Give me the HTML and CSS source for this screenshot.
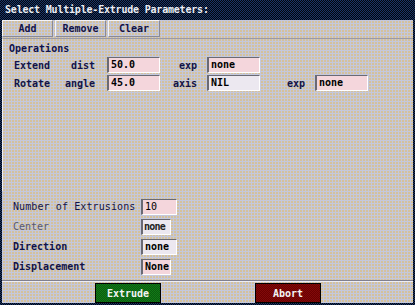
FILE: index.html
```html
<!DOCTYPE html>
<html lang="en">
<head>
  <meta charset="UTF-8" />
  <title>Select Multiple-Extrude Parameters</title>
  <link rel="stylesheet" href="styles.css">
</head>
<body>
  <div class="window">
    <div class="titlebar">Select Multiple-Extrude Parameters:</div>

    <div class="body">
      <div class="toolbar">
        <button class="tool">Add</button>
        <button class="tool">Remove</button>
        <button class="tool">Clear</button>
      </div>

      <div class="ops">
        <div class="ops-title">Operations</div>
        <div class="op-row">
          <span class="op-name">Extend</span>
          <span class="key k1">dist</span>
          <span class="field pink">50.0</span>
          <span class="key k2">exp</span>
          <span class="field pink">none</span>
        </div>
        <div class="op-row">
          <span class="op-name">Rotate</span>
          <span class="key k1">angle</span>
          <span class="field pink">45.0</span>
          <span class="key k2">axis</span>
          <span class="field pale">NIL</span>
          <span class="key k3">exp</span>
          <span class="field pink">none</span>
        </div>
      </div>

      <div class="params">
        <div class="param-row">
          <span class="param-label thin">Number of Extrusions</span>
          <span class="field pink wide thin">10</span>
        </div>
        <div class="param-row">
          <span class="param-label dim">Center</span>
          <span class="field pale narrow squeeze">none</span>
        </div>
        <div class="param-row">
          <span class="param-label">Direction</span>
          <span class="field pale wide">none</span>
        </div>
        <div class="param-row">
          <span class="param-label">Displacement</span>
          <span class="field pink narrow">None</span>
        </div>
      </div>

      <div class="footer">
        <button class="act extrude">Extrude</button>
        <button class="act abort">Abort</button>
      </div>
    </div>
  </div>
</body>
</html>
```

FILE: styles.css
```css
body {
  margin: 0;
  font-family: "DejaVu Sans Mono", "Liberation Mono", monospace;
  font-size: 10px;
}

.window {
  width: 415px;
  height: 305px;
  display: flex;
  flex-direction: column;
  background: repeating-conic-gradient(#02060c 0 25%, #1a3468 0 50%) 0 0 / 2px 2px;
  overflow: hidden;
}

.titlebar {
  height: 19px;
  line-height: 19px;
  padding-left: 5px;
  color: #eceef4;
  font-weight: bold;
  letter-spacing: -0.2px;
}

.body {
  flex: 1;
  margin: 1px 2px 2px 2px;
  display: flex;
  flex-direction: column;
  background-color: #d4c19c;
  background-image:
    repeating-linear-gradient(90deg, #c4c8dc 0 1px, transparent 1px 3px),
    repeating-linear-gradient(0deg, #c4c8dc 0 1px, transparent 1px 3px);
}

.toolbar {
  display: flex;
  gap: 2px;
  height: 17px;
}

.tool {
  width: 51px;
  height: 17px;
  padding: 0;
  font: inherit;
  font-weight: bold;
  color: #10124a;
  background: transparent;
  border: 1px solid;
  border-color: #f4f4f8 #8a8a96 #8a8a96 #f4f4f8;
}

.tool:nth-child(3) {
  width: 52px;
}

.ops {
  margin-top: 1px;
  border-left: 1px solid #eeeef4;
  border-top: 1px solid #9a9aa8;
  padding: 2px 0 0 0;
  height: 150px;
}

.ops-title {
  padding-left: 6px;
  height: 15px;
  line-height: 15px;
  color: #10124a;
  font-weight: bold;
}

.op-row {
  display: flex;
  align-items: center;
  height: 18px;
  padding-left: 11px;
  color: #10124a;
  font-weight: bold;
}

.op-name {
  width: 44px;
}

.key {
  text-align: right;
  margin-right: 10px;
}

.k1 {
  width: 37px;
  margin-right: 12px;
}

.k2 {
  width: 37px;
}

.k3 {
  width: 45px;
}

.field {
  box-sizing: border-box;
  width: 53px;
  height: 16px;
  line-height: 14px;
  padding-left: 2px;
  color: #000;
  font-weight: bold;
  border: 1px solid;
  border-color: #6a6a74 #ffffff #ffffff #6a6a74;
  border-left-width: 2px;
}

.pink {
  background: #f4d6dc;
}

.pale {
  background: #ece8f0;
}

.params {
  display: flex;
  flex-direction: column;
  gap: 3px;
  padding-left: 11px;
  margin-top: 7px;
}

.param-row {
  display: flex;
  align-items: center;
  height: 17px;
  color: #10124a;
  font-weight: bold;
}

.param-label {
  width: 128px;
}

.param-label.thin {
  font-weight: normal;
  letter-spacing: 0.1px;
}

.param-label.dim {
  color: #565874;
  font-weight: normal;
}

.field.wide {
  width: 36px;
}

.field.narrow {
  width: 30px;
}

.field.thin {
  font-weight: normal;
}

.field.squeeze {
  padding-left: 1px;
  letter-spacing: -0.8px;
  color: #222;
}

.footer {
  margin-top: auto;
  border-top: 1px solid #808090;
  box-shadow: inset 0 1px 0 #eeeef4;
  height: 21px;
  padding-top: 1px;
  display: flex;
  align-items: flex-end;
}

.act {
  width: 66px;
  height: 20px;
  padding: 0;
  font: inherit;
  font-weight: bold;
  color: #f4f4f4;
  border: 1px solid #000;
}

.extrude {
  margin-left: 93px;
  background: repeating-conic-gradient(#0a5c0e 0 25%, #137a18 0 50%) 0 0 / 2px 2px;
}

.abort {
  margin-left: 94px;
  background: repeating-conic-gradient(#6a0000 0 25%, #820a0a 0 50%) 0 0 / 2px 2px;
}
```
